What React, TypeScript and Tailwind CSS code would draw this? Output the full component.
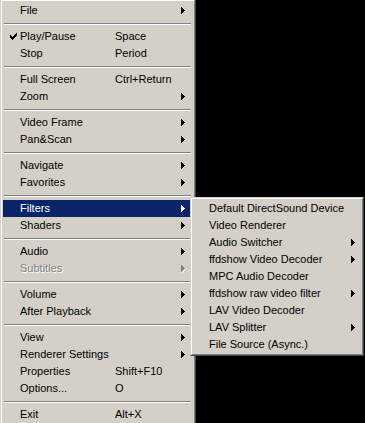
import React from "react";

type Entry =
  | "sep"
  | {
      label: string;
      shortcut?: string;
      sub?: boolean;
      checked?: boolean;
      disabled?: boolean;
      active?: boolean;
    };

const mainItems: Entry[] = [
  { label: "File", sub: true },
  "sep",
  { label: "Play/Pause", shortcut: "Space", checked: true },
  { label: "Stop", shortcut: "Period" },
  "sep",
  { label: "Full Screen", shortcut: "Ctrl+Return" },
  { label: "Zoom", sub: true },
  "sep",
  { label: "Video Frame", sub: true },
  { label: "Pan&Scan", sub: true },
  "sep",
  { label: "Navigate", sub: true },
  { label: "Favorites", sub: true },
  "sep",
  { label: "Filters", sub: true, active: true },
  { label: "Shaders", sub: true },
  "sep",
  { label: "Audio", sub: true },
  { label: "Subtitles", sub: true, disabled: true },
  "sep",
  { label: "Volume", sub: true },
  { label: "After Playback", sub: true },
  "sep",
  { label: "View", sub: true },
  { label: "Renderer Settings", sub: true },
  { label: "Properties", shortcut: "Shift+F10" },
  { label: "Options...", shortcut: "O" },
  "sep",
  { label: "Exit", shortcut: "Alt+X" },
];

const filterItems: Entry[] = [
  { label: "Default DirectSound Device" },
  { label: "Video Renderer" },
  { label: "Audio Switcher", sub: true },
  { label: "ffdshow Video Decoder", sub: true },
  { label: "MPC Audio Decoder" },
  { label: "ffdshow raw video filter", sub: true },
  { label: "LAV Video Decoder" },
  { label: "LAV Splitter", sub: true },
  { label: "File Source (Async.)" },
];

// classic 7x7 check mark
const checkPixels = [
  [6, 0], [5, 1], [6, 1], [0, 2], [4, 2], [5, 2], [6, 2],
  [0, 3], [1, 3], [3, 3], [4, 3], [5, 3], [0, 4], [1, 4], [2, 4],
  [3, 4], [4, 4], [1, 5], [2, 5], [3, 5], [2, 6],
];

function Check() {
  return (
    <svg width="7" height="7" viewBox="0 0 7 7" shapeRendering="crispEdges">
      {checkPixels.map(([x, y]) => (
        <rect key={`${x}-${y}`} x={x} y={y} width="1" height="1" fill="#000" />
      ))}
    </svg>
  );
}

function Arrow({ color }: { color: string }) {
  return (
    <svg width="4" height="7" viewBox="0 0 4 7" shapeRendering="crispEdges">
      <path d="M0 0h1v7h-1zM1 1h1v5h-1zM2 2h1v3h-1zM3 3h1v1h-1z" fill={color} />
    </svg>
  );
}

function Row({ item, gutter, labelWidth, arrowGap }: { item: Exclude<Entry, "sep">; gutter: string; labelWidth: string; arrowGap: string }) {
  const text = item.active ? "text-white" : item.disabled ? "text-[#808080]" : "text-black";
  const shadow = item.disabled ? "[text-shadow:1px_1px_0_#ffffff]" : "";
  return (
    <div className={`flex h-[17px] items-center ${item.active ? "bg-[#0a246a]" : ""} ${text}`}>
      <div className={`${gutter} flex shrink-0 justify-center pl-[3px]`}>
        {item.checked && <Check />}
      </div>
      <div className={`${labelWidth} shrink-0 whitespace-nowrap ${shadow}`}>{item.label}</div>
      <div className="flex-1 whitespace-nowrap">{item.shortcut}</div>
      {item.sub && (
        <div className={`${arrowGap} relative flex`}>
          {item.disabled && (
            <div className="absolute left-[1px] top-[1px]">
              <Arrow color="#ffffff" />
            </div>
          )}
          <div className="relative flex">
            <Arrow color={item.active ? "#ffffff" : item.disabled ? "#808080" : "#000000"} />
          </div>
        </div>
      )}
    </div>
  );
}

function Separator() {
  return (
    <div className="flex h-[9px] flex-col justify-center pl-[1px] pr-[2px]">
      <div className="h-[1px] bg-[#808080]" />
      <div className="h-[1px] bg-white" />
    </div>
  );
}

function MenuFrame({ children, className }: { children: React.ReactNode; className?: string }) {
  return (
    <div className={`border-l border-t border-r border-b border-l-[#d4d0c8] border-t-[#d4d0c8] border-r-[#404040] border-b-[#404040] bg-[#d4d0c8] ${className ?? ""}`}>
      <div className="border-l border-t border-r border-b border-l-white border-t-white border-r-[#808080] border-b-[#808080] p-[1px]">
        {children}
      </div>
    </div>
  );
}

export default function App() {
  return (
    <div
      className="relative h-[423px] w-[365px] overflow-hidden bg-black text-[11px] leading-none"
      style={{ fontFamily: '"Liberation Sans", Arial, sans-serif' }}
    >
      <MenuFrame className="-mt-[1px] w-[196px]">
        {mainItems.map((item, i) =>
          item === "sep" ? (
            <Separator key={i} />
          ) : (
            <Row key={i} item={item} gutter="w-[17px]" labelWidth="w-[95px]" arrowGap="mr-[8px]" />
          ),
        )}
      </MenuFrame>

      {/* Filters submenu */}
      <MenuFrame className="absolute left-[190px] top-[197px] w-[174px]">
        {filterItems.map((item, i) =>
          item === "sep" ? (
            <Separator key={i} />
          ) : (
            <Row key={i} item={item} gutter="w-[16px]" labelWidth="w-[130px]" arrowGap="mr-[6px]" />
          ),
        )}
      </MenuFrame>
    </div>
  );
}
